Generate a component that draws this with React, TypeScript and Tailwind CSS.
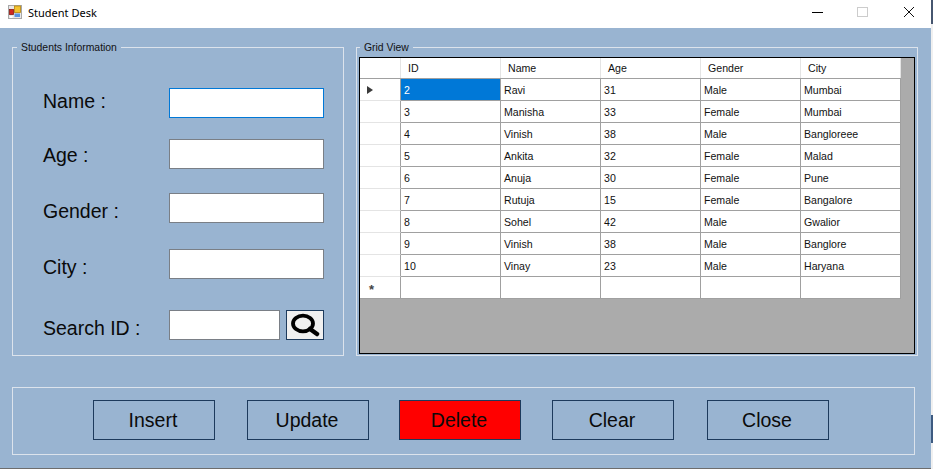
const SANS = "font-['Liberation_Sans',Arial,sans-serif]";

const fields = [
  { label: "Name :", mt: "mt-[33px]", nudge: "mb-[2px]", focused: true },
  { label: "Age :", mt: "mt-[21px]", nudge: "mt-[4px]" },
  { label: "Gender :", mt: "mt-[24px]", nudge: "mt-[8px]" },
  { label: "City :", mt: "mt-[26px]", nudge: "mt-[8px]" },
];

const students = [
  ["2", "Ravi", "31", "Male", "Mumbai"],
  ["3", "Manisha", "33", "Female", "Mumbai"],
  ["4", "Vinish", "38", "Male", "Bangloreee"],
  ["5", "Ankita", "32", "Female", "Malad"],
  ["6", "Anuja", "30", "Female", "Pune"],
  ["7", "Rutuja", "15", "Female", "Bangalore"],
  ["8", "Sohel", "42", "Male", "Gwalior"],
  ["9", "Vinish", "38", "Male", "Banglore"],
  ["10", "Vinay", "23", "Male", "Haryana"],
  ["", "", "", "", ""],
];

const columns = ["ID", "Name", "Age", "Gender", "City"];

const AppIcon = () => (
  <svg width="14" height="14" viewBox="0 0 14 14" className="mr-[6px] mb-[4px]">
    <rect x="0.5" y="0.5" width="13" height="13" fill="#e8e8e8" stroke="#a8a8a8" />
    <rect x="6.5" y="1" width="6" height="6.5" fill="#f2c230" stroke="#b8860b" strokeWidth="0.8" />
    <rect x="1.5" y="4.5" width="4" height="5" fill="#d0281f" stroke="#8c1a12" strokeWidth="0.8" />
    <rect x="6.5" y="8.5" width="5.5" height="3.5" fill="#5b94e0" />
    <rect x="2" y="11" width="2.5" height="2" fill="#ffffff" />
  </svg>
);

const SearchIcon = () => (
  <svg width="30" height="24" viewBox="0 0 30 24">
    <ellipse cx="13" cy="10.5" rx="10" ry="7.8" fill="none" stroke="#000" strokeWidth="3.8" />
    <path d="M20 16 L27 21" stroke="#000" strokeWidth="4.5" strokeLinecap="round" />
  </svg>
);

const ActionButton = ({ label, danger }: { label: string; danger?: boolean }) => (
  <button
    className={`w-[122px] h-[40px] mb-[2px] pt-[2px] pr-[2px] border border-[#1d3a5c] text-[19.5px] leading-none text-[#0a0a0a] ${
      danger ? "bg-[#ff0000]" : "bg-transparent"
    }`}
  >
    {label}
  </button>
);

export default function App() {
  return (
    <div className={`flex w-[933px] h-[469px] overflow-hidden bg-white ${SANS}`}>
      <div className="flex flex-col w-[931px] h-[469px]">
        {/* title bar */}
        <div className="flex items-center h-[28px] bg-white pl-[8px] shrink-0">
          <AppIcon />
          <span className="font-['Noto_Sans',sans-serif] text-[11px] text-black mb-[2px]">Student Desk</span>
          <div className="ml-auto flex items-center h-full pb-[4px]">
            <div className="w-[11px] h-px bg-black mr-[34px]" />
            <div className="w-[11px] h-[10px] border border-[#cccccc] mr-[35px]" />
            <svg width="12" height="12" viewBox="0 0 12 12" className="mr-[16px]">
              <path d="M1 1 L11 11 M11 1 L1 11" stroke="#111" strokeWidth="1" />
            </svg>
          </div>
        </div>

        <div className="flex-1 flex flex-col bg-[#99b4d1] border-b border-[#6d6d6d]">
          <div className="flex gap-[12px] pl-[12px] pt-[12px]">
            {/* students information */}
            <fieldset className="w-[332px] h-[316px] border border-[#dce3ec] pl-[30px] pr-[19px] min-w-0">
              <legend className="-ml-[26px] px-[4px] pt-px text-[10.4px] leading-[14px] text-[#111]">Students Information</legend>
              {fields.map((f) => (
                <div key={f.label} className={`flex items-center justify-between h-[30px] ${f.mt}`}>
                  <span className={`text-[19.5px] text-[#0a0a0a] ${f.nudge}`}>{f.label}</span>
                  <input
                    className={`w-[155px] h-[30px] bg-white border ${
                      f.focused ? "border-[#0078d7]" : "border-[#7a7f86]"
                    }`}
                  />
                </div>
              ))}
              <div className="flex items-center h-[30px] mt-[31px]">
                <span className="w-[126px] mt-[8px] text-[19.5px] text-[#0a0a0a]">Search ID :</span>
                <input className="w-[111px] h-[30px] bg-white border border-[#7a7f86]" />
                <button className="ml-[6px] w-[38px] h-[30px] flex items-center justify-center bg-[#f0f0f0] border border-[#1d3a5c]">
                  <SearchIcon />
                </button>
              </div>
            </fieldset>

            {/* grid view */}
            <fieldset className="w-[562px] h-[316px] border border-[#dce3ec] pl-[2px] pr-[2px] min-w-0">
              <legend className="ml-[1px] px-[4px] pt-px text-[10.4px] leading-[14px] text-[#111]">Grid View</legend>
              <div className="h-[297px] mt-[2px] bg-[#ababab] border border-black">
                <div className="flex h-[20px] w-[541px] bg-white">
                  <div className="w-[41px] border-r border-[#e4e4e4]" />
                  {columns.map((c) => (
                    <div key={c} className="w-[100px] pl-[7px] border-r border-[#e4e4e4] text-[10.6px] leading-[20px] text-[#111]">
                      {c}
                    </div>
                  ))}
                </div>
                {students.map((row, i) => (
                  <div key={i} className="flex h-[22px] w-[541px] bg-white">
                    <div
                      className={`w-[41px] flex items-center pl-[7px] border-r border-r-[#a0a0a0] border-t ${
                        i === 0 ? "border-t-[#a0a0a0]" : "border-t-[#e4e4e4]"
                      }`}
                    >
                      {i === 0 && <span className="w-0 h-0 border-y-[4.5px] border-y-transparent border-l-[6px] border-l-[#3a3a3a]" />}
                      {i === students.length - 1 && <span className="ml-[2px] mt-[3px] text-[13px] font-bold leading-none text-[#444]">*</span>}
                    </div>
                    {row.map((v, j) => (
                      <div
                        key={j}
                        className={`w-[100px] pl-[3px] border-r border-t border-[#a0a0a0] text-[10.6px] leading-[22px] ${
                          i === 0 && j === 0 ? "bg-[#0078d7] text-white" : "text-[#111]"
                        }`}
                      >
                        {v}
                      </div>
                    ))}
                  </div>
                ))}
                <div className="h-px w-[541px] bg-[#a0a0a0]" />
              </div>
            </fieldset>
          </div>

          {/* action buttons */}
          <div className="ml-[12px] mt-[31px] w-[903px] h-[68px] border border-[#dce3ec] flex items-center pl-[80px]">
            <ActionButton label="Insert" />
            <div className="w-[32px]" />
            <ActionButton label="Update" />
            <div className="w-[30px]" />
            <ActionButton label="Delete" danger />
            <div className="w-[31px]" />
            <ActionButton label="Clear" />
            <div className="w-[33px]" />
            <ActionButton label="Close" />
          </div>
        </div>
      </div>
      <div className="flex flex-col w-[2px] h-[469px]">
        <div className="h-[24px] bg-[#46566f]" />
        <div className="flex-1 bg-[#f0f0f0]" />
        <div className="h-[28px] bg-[#3d5a80]" />
        <div className="h-[26px] bg-[#f0f0f0]" />
      </div>
    </div>
  );
}
